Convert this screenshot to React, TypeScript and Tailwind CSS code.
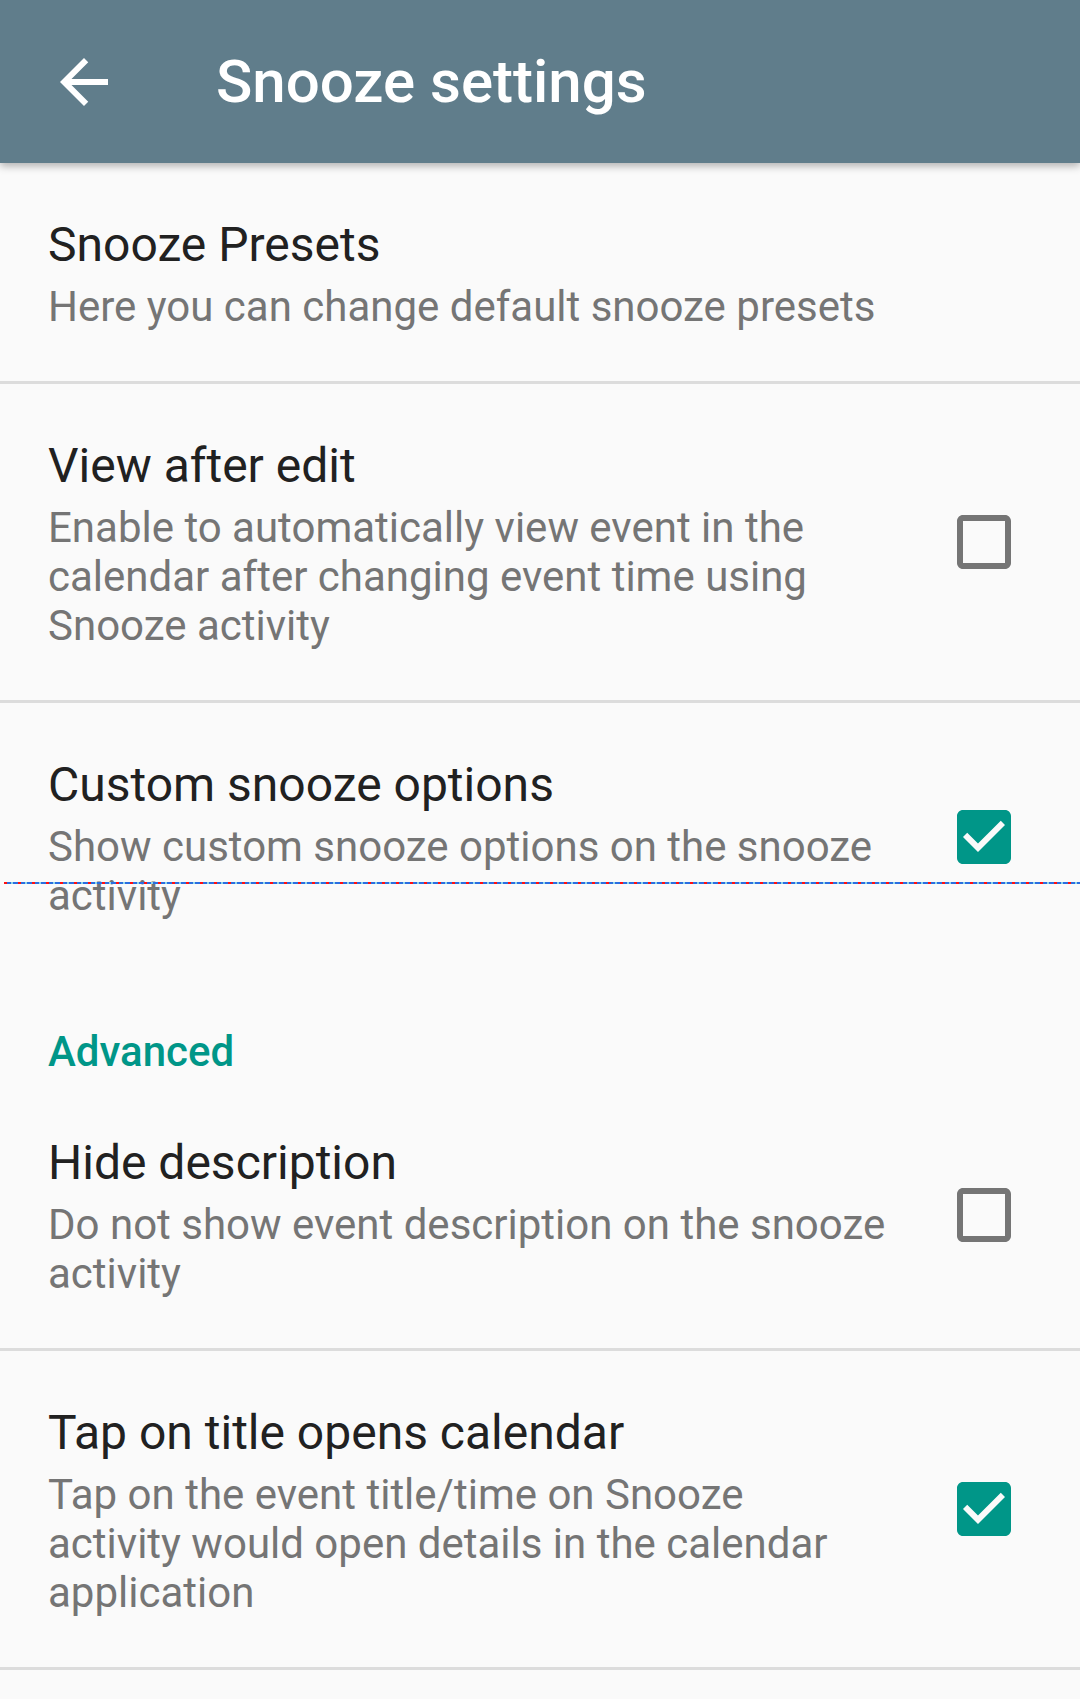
import React, { FC } from "react"

type Pref = {
    title: string
    lines: string[]
    checked?: boolean
}

const general: Pref[] = [
    {
        title: "Snooze Presets",
        lines: ["Here you can change default snooze presets"],
    },
    {
        title: "View after edit",
        lines: [
            "Enable to automatically view event in the",
            "calendar after changing event time using",
            "Snooze activity",
        ],
        checked: false,
    },
    {
        title: "Custom snooze options",
        lines: ["Show custom snooze options on the snooze", "activity"],
        checked: true,
    },
]

const advanced: Pref[] = [
    {
        title: "Hide description",
        lines: ["Do not show event description on the snooze", "activity"],
        checked: false,
    },
    {
        title: "Tap on title opens calendar",
        lines: [
            "Tap on the event title/time on Snooze",
            "activity would open details in the calendar",
            "application",
        ],
        checked: true,
    },
]

const Checkbox: FC<{ checked: boolean }> = ({ checked }) => (
    <svg viewBox="0 0 24 24" className="w-[72px] h-[72px]">
        {checked ? (
            <path fill="#009688"
                  d="M19 3H5c-1.11 0-2 .9-2 2v14c0 1.1.89 2 2 2h14c1.11 0 2-.9 2-2V5c0-1.1-.89-2-2-2zm-9 14l-5-5 1.41-1.41L10 14.17l7.59-7.59L19 8l-9 9z"/>
        ) : (
            <path fill="#757575"
                  d="M19 5v14H5V5h14m0-2H5c-1.1 0-2 .9-2 2v14c0 1.1.9 2 2 2h14c1.1 0 2-.9 2-2V5c0-1.1-.9-2-2-2z"/>
        )}
    </svg>
)

const PrefRow: FC<{ pref: Pref, divider: boolean }> = ({ pref, divider }) => (
    <>
        <div className="flex items-center pl-[48px] pr-[60px]">
            <div className="flex-1 flex flex-col pt-[54px] pb-[50px]">
                <span className="text-[48px] leading-[56px] text-[#212121]">{pref.title}</span>
                <div className="mt-[9px] flex flex-col text-[42px] leading-[49px] text-[#757575]">
                    {pref.lines.map((line) => (
                        <span key={line} className="whitespace-nowrap">{line}</span>
                    ))}
                </div>
            </div>
            {pref.checked !== undefined && <Checkbox checked={pref.checked}/>}
        </div>
        {divider && <div className="h-[3px] bg-[#dcdcdc]"/>}
    </>
)

const App: FC = () => {
    return (
        <div className="relative min-h-[1699px] bg-[#fafafa] font-['Roboto',sans-serif]">
            <header className="relative z-10 h-[163px] bg-[#607d8b] flex items-center
                               shadow-[0_3px_8px_rgba(0,0,0,0.3)]">
                <div className="w-[216px] pl-[48px] flex items-center">
                    <svg viewBox="0 0 24 24" className="w-[72px] h-[72px]">
                        <path fill="#ffffff" d="M20 11H7.83l5.59-5.59L12 4l-8 8 8 8 1.41-1.41L7.83 13H20v-2z"/>
                    </svg>
                </div>
                <h1 className="text-[60px] leading-[70px] font-medium text-white">Snooze settings</h1>
            </header>

            <PrefRow pref={general[0]} divider/>
            <PrefRow pref={general[1]} divider/>
            <PrefRow pref={general[2]} divider={false}/>

            <div className="pl-[48px] pt-[57px] pb-[5px] text-[42px] leading-[49px] font-medium text-[#009688]">
                Advanced
            </div>

            <PrefRow pref={advanced[0]} divider/>
            <PrefRow pref={advanced[1]} divider/>

            {/* debug guide line that sits across the custom options row */}
            <div className="absolute left-[4px] right-0 top-[882px] h-[2px] bg-[#2a6fe0]">
                <div className="h-full bg-[repeating-linear-gradient(90deg,#ff1010_0_3px,transparent_3px_7px,#8fd8e8_7px_9px,transparent_9px_14px)]"/>
            </div>
        </div>
    )
}

export default App
